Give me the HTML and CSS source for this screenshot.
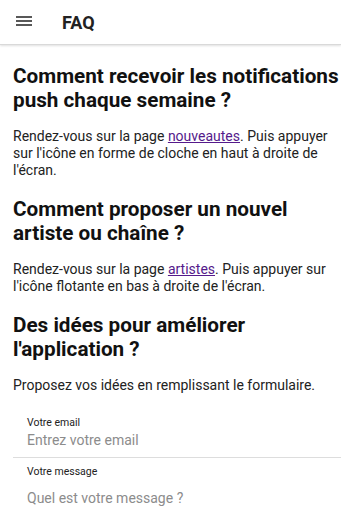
FILE: index.html
```html
<!DOCTYPE html>
<html lang="fr">
<head>
<meta charset="utf-8">
<link rel="stylesheet" href="styles.css">
</head>
<body>
<header class="toolbar">
  <button class="menu-btn" aria-label="menu">
    <svg width="24" height="24" viewBox="0 0 24 24"><path d="M4 7h16M4 11h16M4 15h16" stroke="#222" stroke-width="1.6" fill="none"/></svg>
  </button>
  <h1 class="title">FAQ</h1>
</header>
<main class="content">
  <section class="faq">
    <h2 class="question">Comment recevoir les notifications push chaque semaine ?</h2>
    <p class="answer">Rendez-vous sur la page <a href="#">nouveautes</a>. Puis appuyer sur l'icône en forme de cloche en haut à droite de l'écran.</p>
  </section>
  <section class="faq">
    <h2 class="question">Comment proposer un nouvel artiste ou chaîne ?</h2>
    <p class="answer">Rendez-vous sur la page <a href="#">artistes</a>. Puis appuyer sur l'icône flotante en bas à droite de l'écran.</p>
  </section>
  <section class="faq">
    <h2 class="question">Des idées pour améliorer l'application ?</h2>
    <p class="answer">Proposez vos idées en remplissant le formulaire.</p>
  </section>
  <form class="form">
    <label class="item">
      <span class="label">Votre email</span>
      <input class="input" type="email" placeholder="Entrez votre email">
    </label>
    <label class="item">
      <span class="label">Votre message</span>
      <textarea class="input textarea" placeholder="Quel est votre message ?"></textarea>
    </label>
  </form>
</main>
</body>
</html>
```
FILE: styles.css
```css
* { box-sizing: border-box; }
html, body { margin: 0; padding: 0; background: #fff; }
body {
  font-family: Roboto, "Noto Sans", sans-serif;
  color: #000;
  width: 341px;
  overflow: hidden;
}
.toolbar {
  height: 45px;
  display: flex;
  align-items: center;
  border-bottom: 1px solid #d9d9d9;
  box-shadow: 0 1px 2px rgba(0,0,0,0.12);
}
.menu-btn {
  background: none;
  border: 0;
  padding: 0;
  margin-left: 12px;
  width: 24px;
  height: 24px;
  display: flex;
}
.title {
  margin: 0 0 0 26px;
  font-size: 18px;
  font-weight: 700;
  color: #222;
}
.content { padding: 0 0 0 13px; }
.question {
  margin: 18px 0 0;
  font-size: 20.7px;
  line-height: 24px;
  font-weight: 700;
  color: #111;
}
.faq:first-child .question { margin-top: 19px; }
.answer {
  margin: 16px 0 0;
  font-size: 14px;
  line-height: 17px;
  color: #222;
}
.answer a { color: #551a8b; }
.form { margin-top: 13px; }
.item {
  display: flex;
  flex-direction: column;
  padding-left: 14px;
  border-bottom: 1px solid #ddd;
}
.item:last-child { border-bottom: 0; }
.label {
  font-size: 10.5px;
  line-height: 12px;
  color: #222;
  margin-top: 8px;
}
.item:first-child .label { margin-top: 10px; }
.input {
  border: 0;
  outline: none;
  padding: 0;
  font-family: inherit;
  font-size: 14px;
  line-height: 20px;
  height: 22px;
  margin: 0 0 6px;
  color: #222;
  background: transparent;
}
.input::placeholder { color: #8c8c8c; }
.textarea {
  resize: none;
  height: 28px;
  margin-top: 10px;
}
```
